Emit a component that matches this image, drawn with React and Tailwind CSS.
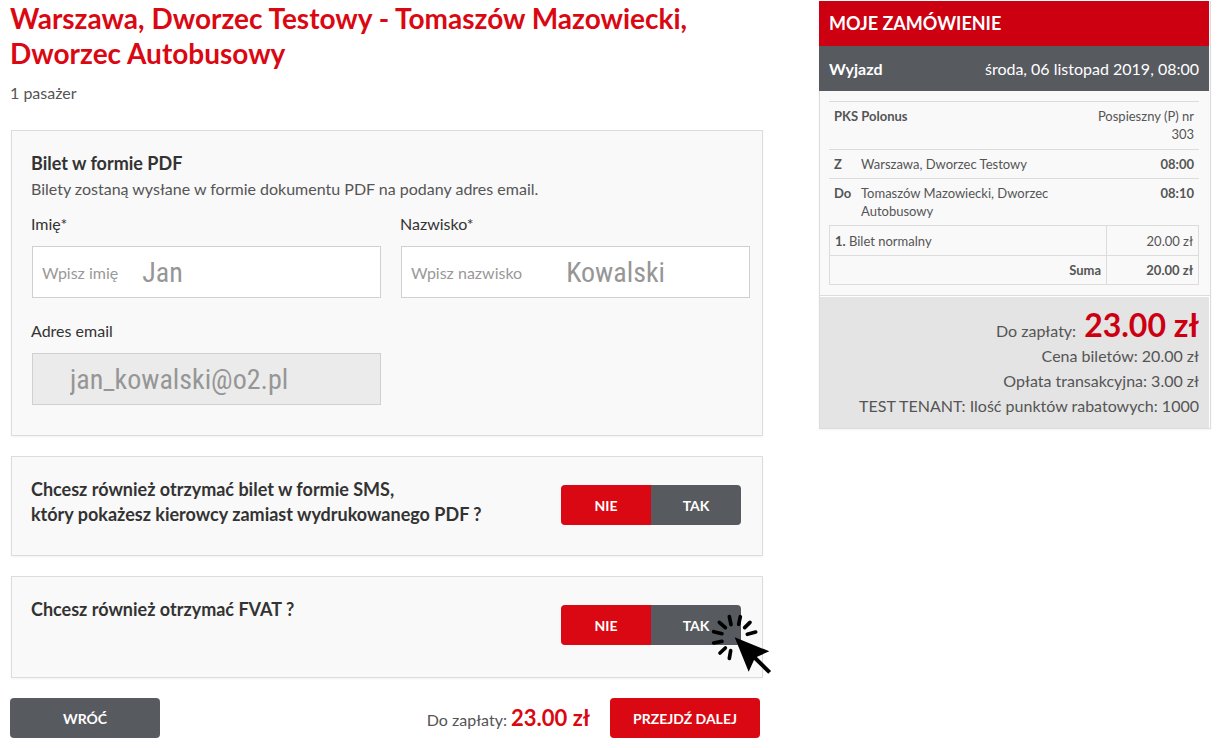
import React, { useState } from 'react';

const Field = ({ id, label, hint, value, onChange, type = 'text', readOnly = false }) => (
    <div>
        <label htmlFor={id} className="block text-[#333333]">{label}</label>
        <div className={`mt-[10px] ml-px h-[52px] flex items-center px-[9px] border border-[#d0d0d0] ${readOnly ? 'bg-[#ebebeb]' : 'bg-white'}`}>
            {hint && <span className="shrink-0 text-[#999999]">{hint}</span>}
            <input
                id={id}
                type={type}
                value={value}
                readOnly={readOnly}
                onChange={onChange}
                className={`min-w-0 flex-1 h-full bg-transparent outline-none text-[#969696] text-[28px] font-normal font-['Roboto_Condensed','Liberation_Sans_Narrow',sans-serif] ${id === 'lastName' ? 'pl-11' : id === 'email' ? 'pl-7' : 'pl-6'}`}
            />
        </div>
    </div>
);

const YesNo = ({ label, value, onChange }) => (
    <div role="group" aria-label={label} className="mt-2 flex shrink-0 rounded overflow-hidden text-white text-[14px] font-bold">
        <button
            type="button"
            aria-pressed={!value}
            onClick={() => onChange(false)}
            className="w-[90px] h-10 bg-[#da0812]"
        >
            NIE
        </button>
        <button
            type="button"
            aria-pressed={value}
            onClick={() => onChange(true)}
            className="w-[90px] h-10 bg-[#575a5f]"
        >
            TAK
        </button>
    </div>
);

const ClickCursor = () => (
    <svg
        viewBox="60 40 192 192"
        className="absolute top-9 -right-3 w-16 h-16 pointer-events-none"
        fill="none"
        stroke="#000"
        strokeWidth="11"
        strokeLinecap="round"
        aria-hidden="true"
    >
        <path d="M118 51l5 24M151 51l-5 23M180 68l-16 16M197 97l-25 7M88 68l18 16M71 96l25 6M71 130l25-5M90 160l16-15M118 176l4-23" />
        <path d="M192 172l47 46" strokeLinecap="butt" strokeWidth="12" />
        <path d="M134 113l104 42-38 17-7 7-17 37z" fill="#000" stroke="none" />
    </svg>
);

const OrderSummary = () => (
    <aside className="mt-px w-[392px] shrink-0 border border-t-0 border-[#dcdcdc] bg-[#f9f9f9] shadow-xs">
        <h2 className="-ml-px mr-px h-[45px] px-[10px] flex items-center bg-[#cc0011] text-white text-[18px] font-bold">MOJE ZAMÓWIENIE</h2>
        <div className="-ml-px mr-px h-[45px] px-[10px] flex items-center justify-between bg-[#575a5f] text-white">
            <span className="font-bold">Wyjazd</span>
            <span>środa, 06 listopad 2019, 08:00</span>
        </div>

        <div className="py-[10px] pl-[9px] pr-[11px] text-[13px] leading-[18px]">
            <table className="w-full border-collapse">
                <tbody className="align-top">
                    <tr className="border-t border-[#dcdcdc]">
                        <th colSpan={2} scope="row" className="px-[5px] py-[5px] text-left">PKS Polonus</th>
                        <td className="w-[120px] px-[5px] pt-[5px] pb-[6px] text-right">Pospieszny (P) nr 303</td>
                    </tr>
                    <tr className="border-t border-[#dcdcdc]">
                        <th scope="row" className="w-[27px] pl-[5px] py-[5px] text-left">Z</th>
                        <td className="pl-[5px] py-[5px]">Warszawa, Dworzec Testowy</td>
                        <td className="px-[5px] py-[5px] text-right font-bold">08:00</td>
                    </tr>
                    <tr className="border-t border-[#dcdcdc]">
                        <th scope="row" className="w-[27px] pl-[5px] py-[5px] text-left">Do</th>
                        <td className="pl-[5px] py-[5px]">Tomaszów Mazowiecki, Dworzec Autobusowy</td>
                        <td className="px-[5px] py-[5px] text-right font-bold">08:10</td>
                    </tr>
                </tbody>
            </table>
            <table className="w-full border-collapse border border-[#dcdcdc]">
                <tbody>
                    <tr>
                        <td className="border border-[#dcdcdc] px-[5px] pt-[6px] pb-[5px]"><b>1.</b> Bilet normalny</td>
                        <td className="w-[92px] border border-[#dcdcdc] px-[5px] pt-[6px] pb-[5px] text-right">20.00 zł</td>
                    </tr>
                    <tr>
                        <th scope="row" className="border border-[#dcdcdc] px-[5px] py-[5px] text-right">Suma</th>
                        <td className="border border-[#dcdcdc] px-[5px] py-[5px] text-right font-bold">20.00 zł</td>
                    </tr>
                </tbody>
            </table>
        </div>

        <div className="border-t border-[#dcdcdc] bg-white pt-px pr-px">
            <div className="bg-[#e4e4e4] pt-2 pb-[10px] px-[10px] text-right">
                <p className="h-[38px] flex items-baseline justify-end gap-2">
                    Do zapłaty: <strong className="text-[32px] leading-10 font-bold text-[#cc0011]">23.00 zł</strong>
                </p>
                <p>Cena biletów: 20.00 zł</p>
                <p>Opłata transakcyjna: 3.00 zł</p>
                <p>TEST TENANT: Ilość punktów rabatowych: 1000</p>
            </div>
        </div>
    </aside>
);

const App = () => {
    const [firstName, setFirstName] = useState('Jan');
    const [lastName, setLastName] = useState('Kowalski');
    const [sms, setSms] = useState(false);
    const [invoice, setInvoice] = useState(false);

    return (
        <div className="flex items-start gap-14 pl-[10px] pr-[21px] pb-[10px] bg-white font-['Lato',sans-serif] text-[16px] leading-[25px] text-[#555555]">
            <main className="flex-1 min-w-0 pt-px">
                <h1 className="text-[28px] leading-[35px] font-bold text-[#da0812]">
                    Warszawa, Dworzec Testowy - Tomaszów Mazowiecki, Dworzec Autobusowy
                </h1>
                <p className="mt-[9px]">1 pasażer</p>

                <form onSubmit={(e) => e.preventDefault()} className="mt-[25px]">
                    <section className="ml-px border border-[#dcdcdc] bg-[#f9f9f9] pt-5 pb-[30px] pl-[19px] pr-3 shadow-xs">
                        <h2 className="text-[18px] font-bold text-[#333333]">Bilet w formie PDF</h2>
                        <p>Bilety zostaną wysłane w formie dokumentu PDF na podany adres email.</p>
                        <div className="mt-[10px] grid grid-cols-2 gap-x-[19px] gap-y-5">
                            <Field id="firstName" label="Imię*" hint="Wpisz imię" value={firstName} onChange={(e) => setFirstName(e.target.value)} />
                            <Field id="lastName" label="Nazwisko*" hint="Wpisz nazwisko" value={lastName} onChange={(e) => setLastName(e.target.value)} />
                            <Field id="email" type="email" label="Adres email" value="jan_kowalski@o2.pl" readOnly />
                        </div>
                    </section>

                    <section className="ml-px mt-5 flex items-start justify-between border border-[#dcdcdc] bg-[#f9f9f9] pt-5 pb-7 pl-[19px] pr-[21px] shadow-xs">
                        <h2 className="text-[18px] font-bold text-[#333333]">
                            Chcesz również otrzymać bilet w formie SMS,<br />
                            który pokażesz kierowcy zamiast wydrukowanego PDF ?
                        </h2>
                        <YesNo label="Bilet SMS" value={sms} onChange={setSms} />
                    </section>

                    <section className="relative ml-px mt-5 flex items-start justify-between border border-[#dcdcdc] bg-[#f9f9f9] pt-5 pb-8 pl-[19px] pr-[21px] shadow-xs">
                        <h2 className="text-[18px] font-bold text-[#333333]">Chcesz również otrzymać FVAT ?</h2>
                        <YesNo label="FVAT" value={invoice} onChange={setInvoice} />
                        <ClickCursor />
                    </section>

                    <div className="mt-5 mr-[3px] flex items-center justify-between">
                        <button type="button" className="w-[150px] h-10 rounded bg-[#575a5f] text-white text-[14px] font-bold">WRÓĆ</button>
                        <div className="flex items-center gap-5">
                            <p>
                                Do zapłaty: <strong className="text-[22px] font-bold text-[#da0812]">23.00 zł</strong>
                            </p>
                            <button type="submit" className="w-[150px] h-10 rounded bg-[#da0812] text-white text-[14px] font-bold">PRZEJDŹ DALEJ</button>
                        </div>
                    </div>
                </form>
            </main>

            <OrderSummary />
        </div>
    );
};

export default App;
